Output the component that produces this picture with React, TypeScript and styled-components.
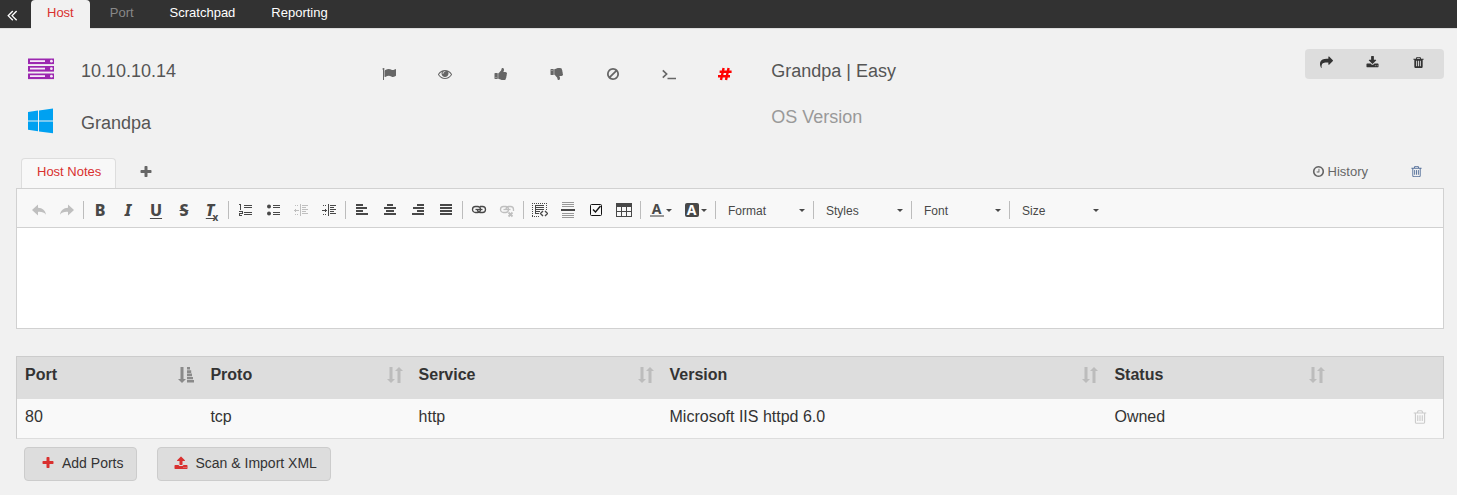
import React from "react";
import styled, { createGlobalStyle, css } from "styled-components";

const GlobalStyle = createGlobalStyle`
  *, *::before, *::after { box-sizing: border-box; }
  body {
    margin: 0;
    background: #f1f1f1;
    color: #333;
    font-family: "Liberation Sans", Arial, Helvetica, sans-serif;
    font-size: 14px;
    line-height: 20px;
  }
  button, input, select, textarea { font: inherit; color: inherit; }
  svg { display: block; flex: none; }
`;

/* ---------- icons ---------- */

const paths = {
  collapse:
    "M1011 1376q0 13-10 23l-50 50q-10 10-23 10t-23-10l-466-466q-10-10-10-23t10-23l466-466q10-10 23-10t23 10l50 50q10 10 10 23t-10 23l-393 393 393 393q10 10 10 23zm384 0q0 13-10 23l-50 50q-10 10-23 10t-23-10l-466-466q-10-10-10-23t10-23l466-466q10-10 23-10t23 10l50 50q10 10 10 23t-10 23l-393 393 393 393q10 10 10 23z",
  flag: "M320 256q0 72-64 110v1266q0 13-9.5 22.5t-22.5 9.5h-64q-13 0-22.5-9.5t-9.5-22.5v-1266q-64-38-64-110 0-53 37.5-90.5t90.5-37.5 90.5 37.5 37.5 90.5zm1472 64v763q0 25-12.5 38.5t-39.5 27.5q-215 116-369 116-61 0-123.5-22t-108.5-48-115.5-48-142.5-22q-192 0-464 146-17 9-33 9-26 0-45-19t-19-45v-742q0-32 31-55 21-14 79-43 236-120 421-120 107 0 200 29t219 88q38 19 88 19 54 0 117.5-21t110-47 88-47 54.5-21q26 0 45 19t19 45z",
  eye: "M1664 960q-152-236-381-353 61 104 61 225 0 185-131.5 316.5t-316.5 131.5-316.5-131.5-131.5-316.5q0-121 61-225-229 117-381 353 133 205 333.5 326.5t434.5 121.5 434.5-121.5 333.5-326.5zm-720-384q0-20-14-34t-34-14q-125 0-214.5 89.5t-89.5 214.5q0 20 14 34t34 14 34-14 14-34q0-86 61-147t147-61q20 0 34-14t14-34zm848 384q0 34-20 69-140 230-376.5 368.5t-499.5 138.5-499.5-139-376.5-368q-20-35-20-69t20-69q140-229 376.5-368t499.5-139 499.5 139 376.5 368q20 35 20 69z",
  thumb:
    "M320 1344q0-26-19-45t-45-19q-27 0-45.5 19t-18.5 45q0 27 18.5 45.5t45.5 18.5q26 0 45-18.5t19-45.5zm160-512v640q0 26-19 45t-45 19h-288q-26 0-45-19t-19-45v-640q0-26 19-45t45-19h288q26 0 45 19t19 45zm1184 0q0 86-55 149 15 44 15 76 3 76-43 137 17 56 0 117-15 57-54 94 9 112-49 181-64 76-197 78h-129q-66 0-144-15.5t-121.5-29-120.5-39.5q-123-43-158-44-26-1-45-19.5t-19-44.5v-641q0-25 18-43.5t43-20.5q24-2 76-59t101-121q68-87 101-120 18-18 31-48t17.5-48.5 13.5-60.5q7-39 12.5-61t19.5-52 34-50q19-19 45-19 46 0 82.5 10.5t60 26 40 40.5 24 45 12 50 5 45 .5 39q0 38-9.5 76t-19 60-27.5 56q-3 6-10 18t-11 22-8 24h277q78 0 135 57t57 135z",
  ban: "M1440 893q0-161-87-295l-754 753q137 89 297 89 111 0 211.5-43.5t173.5-116.5 116-174.5 43-212.5zm-999 299l755-754q-135-91-300-91-148 0-273 73t-198 199-73 274q0 162 89 299zm1223-299q0 157-61 300t-163.5 246-245 164-298.5 61-298.5-61-245-164-163.5-246-61-300 61-299.5 163.5-245.5 245-164 298.5-61 298.5 61 245 164 163.5 245.5 61 299.5z",
  share:
    "M1792 640q0 26-19 45l-512 512q-19 19-45 19t-45-19-19-45v-256h-224q-98 0-175.5 6t-154 21.5-133 42.5-105.5 69.5-80 101-48.5 138.5-17.5 181q0 55 5 123 0 6 2.5 23.5t2.5 26.5q0 15-8.5 25t-23.5 10q-16 0-28-17-7-9-13-22t-13.5-30-10.5-24q-127-285-127-451 0-199 53-333 162-403 875-403h224v-256q0-26 19-45t45-19 45 19l512 512q19 19 19 45z",
  download:
    "M1344 1344q0-26-19-45t-45-19-45 19-19 45 19 45 45 19 45-19 19-45zm256 0q0-26-19-45t-45-19-45 19-19 45 19 45 45 19 45-19 19-45zm128-224v320q0 40-28 68t-68 28h-1472q-40 0-68-28t-28-68v-320q0-40 28-68t68-28h465l135 136q58 56 136 56t136-56l136-136h464q40 0 68 28t28 68zm-325-569q17 41-14 70l-448 448q-18 19-45 19t-45-19l-448-448q-31-29-14-70 17-39 59-39h256v-448q0-26 19-45t45-19h256q26 0 45 19t19 45v448h256q42 0 59 39z",
  upload:
    "M1344 1472q0-26-19-45t-45-19-45 19-19 45 19 45 45 19 45-19 19-45zm256 0q0-26-19-45t-45-19-45 19-19 45 19 45 45 19 45-19 19-45zm128-224v320q0 40-28 68t-68 28h-1472q-40 0-68-28t-28-68v-320q0-40 28-68t68-28h427q21 56 70.5 92t110.5 36h256q61 0 110.5-36t70.5-92h427q40 0 68 28t28 68zm-325-648q-17 40-59 40h-256v448q0 26-19 45t-45 19h-256q-26 0-45-19t-19-45v-448h-256q-42 0-59-40-17-39 14-69l448-448q18-19 45-19t45 19l448 448q31 30 14 69z",
  trash:
    "M704 1376v-704q0-14-9-23t-23-9h-64q-14 0-23 9t-9 23v704q0 14 9 23t23 9h64q14 0 23-9t9-23zm256 0v-704q0-14-9-23t-23-9h-64q-14 0-23 9t-9 23v704q0 14 9 23t23 9h64q14 0 23-9t9-23zm256 0v-704q0-14-9-23t-23-9h-64q-14 0-23 9t-9 23v704q0 14 9 23t23 9h64q14 0 23-9t9-23zm-544-992h448l-48-117q-7-9-17-11h-317q-10 2-17 11zm928 32v64q0 14-9 23t-23 9h-96v948q0 83-47 143.5t-113 60.5h-832q-66 0-113-58.5t-47-141.5v-952h-96q-14 0-23-9t-9-23v-64q0-14 9-23t23-9h309l70-167q15-37 54-63t79-26h320q40 0 79 26t54 63l70 167h309q14 0 23 9t9 23z",
  trashOutline:
    "M704 736v576q0 14-9 23t-23 9h-64q-14 0-23-9t-9-23v-576q0-14 9-23t23-9h64q14 0 23 9t9 23zm256 0v576q0 14-9 23t-23 9h-64q-14 0-23-9t-9-23v-576q0-14 9-23t23-9h64q14 0 23 9t9 23zm256 0v576q0 14-9 23t-23 9h-64q-14 0-23-9t-9-23v-576q0-14 9-23t23-9h64q14 0 23 9t9 23zm128 724v-948h-896v948q0 22 7 40.5t14.5 27 10.5 8.5h832q3 0 10.5-8.5t14.5-27 7-40.5zm-672-1076h448l-48-117q-7-9-17-11h-317q-10 2-17 11zm928 32v64q0 14-9 23t-23 9h-96v948q0 83-47 143.5t-113 60.5h-832q-66 0-113-58.5t-47-141.5v-952h-96q-14 0-23-9t-9-23v-64q0-14 9-23t23-9h309l70-167q15-37 54-63t79-26h320q40 0 79 26t54 63l70 167h309q14 0 23 9t9 23z",
  plus: "M1600 736v192q0 40-28 68t-68 28h-416v416q0 40-28 68t-68 28h-192q-40 0-68-28t-28-68v-416h-416q-40 0-68-28t-28-68v-192q0-40 28-68t68-28h416v-416q0-40 28-68t68-28h192q40 0 68 28t28 68v416h416q40 0 68 28t28 68z",
  clock:
    "M1024 544v448q0 14-9 23t-23 9h-320q-14 0-23-9t-9-23v-64q0-14 9-23t23-9h224v-352q0-14 9-23t23-9h64q14 0 23 9t9 23zm416 352q0-148-73-273t-198-198-273-73-273 73-198 198-73 273 73 273 198 198 273 73 273-73 198-198 73-273zm224 0q0 209-103 385.5t-279.5 279.5-385.5 103-385.5-103-279.5-279.5-103-385.5 103-385.5 279.5-279.5 385.5-103 385.5 103 279.5 279.5 103 385.5z",
};

function Icon({ name, size = 14, flip = false }: { name: keyof typeof paths; size?: number; flip?: boolean }) {
  return (
    <svg width={size} height={size} viewBox="0 0 1792 1792" fill="currentColor" aria-hidden="true">
      <path d={paths[name]} transform={flip ? "translate(0 1792) scale(1 -1)" : undefined} />
    </svg>
  );
}

const TerminalIcon = () => (
  <svg width="14" height="14" viewBox="0 0 14 14" fill="none" stroke="currentColor" aria-hidden="true">
    <path d="M.8 3.3 4.600 7 .8 10.700" strokeWidth="1.700" />
    <path d="M5.500 11.500h8.500" strokeWidth="1.500" />
  </svg>
);

const HashIcon = () => (
  <svg width="14" height="14" viewBox="0 0 14 14" fill="none" stroke="currentColor" strokeWidth="2.4" aria-hidden="true">
    <path d="M5.600 1 3 13M10.600 1 8 13M1.600 4.800H13.600M0 9.200H12" />
  </svg>
);

const ServerIcon = () => (
  <svg width="26" height="22" viewBox="0 0 26 22" aria-hidden="true">
    {[0, 7.5, 15].map((y) => (
      <g key={y}>
        <rect x="0" y={y + 0.5} width="26" height="5.6" fill="#9c27b0" />
        <rect x="2" y={y + 2.2} width="15" height="1.8" fill="#f6e6f8" />
        <circle cx="23.4" cy={y + 3.2} r="1.4" fill="#f6e6f8" />
      </g>
    ))}
  </svg>
);

const WindowsIcon = () => (
  <svg width="25" height="26" viewBox="0 0 25 26" fill="#00a1f1" aria-hidden="true">
    <path d="M0 4 10 2.6V12.4H0zM11 2.4 25 .5V12.4H11zM0 13.4H10V23.2L0 21.8zM11 13.4H25V25.3L11 23.4z" />
  </svg>
);

function SortIcon({ active = false }: { active?: boolean }) {
  return (
    <svg width="16" height="18" viewBox="0 0 16 18" fill={active ? "#8a8a8a" : "#bcbcbc"} aria-hidden="true">
      <path d="M2.5 1h3v12H8l-4 4-4-4h2.5z" />
      {active ? (
        <path d="M9 1h3v2.6H9zM9 4.3h4.2v2.6H9zM9 7.6h5v2.6H9zM9 10.9h6v2.4H9zM9 14h7v2.4H9z" />
      ) : (
        <path d="M10.5 17h3V5H16l-4-4-4 4h2.5z" />
      )}
    </svg>
  );
}

const tool = { width: 16, height: 16, viewBox: "0 0 16 16", "aria-hidden": true, shapeRendering: "crispEdges" as const };
const line = { fill: "none", stroke: "currentColor" };

const UndoIcon = () => (
  <svg {...tool} shapeRendering="auto" fill="currentColor">
    <path d="M7 2.500v3.200c4.600.2 7.400 2.600 8 7-1.800-2.300-4.200-3-8-2.800v3.600L1 8z" />
  </svg>
);
const RedoIcon = () => (
  <svg {...tool} shapeRendering="auto" fill="currentColor">
    <path d="M9 2.500v3.200c-4.600.2-7.400 2.600-8 7 1.800-2.300 4.200-3 8-2.800v3.600l6-5.500z" />
  </svg>
);
const OrderedIcon = () => (
  <svg {...tool} {...line}>
    <path d="M7 3.500h8M7 5.500h8M7 10.500h8M7 12.500h8M2 2.500h1.500v5M2 9.500h3v2H2.500v2H5" />
  </svg>
);
const BulletIcon = () => (
  <svg {...tool} {...line}>
    <path d="M8 3.500h7M8 5.500h7M8 10.500h7M8 12.500h7" />
    <g fill="currentColor" stroke="none" shapeRendering="auto">
      <circle cx="4" cy="4.500" r="2" />
      <circle cx="4" cy="11.500" r="2" />
    </g>
  </svg>
);
const OutdentIcon = () => (
  <svg {...tool} {...line}>
    <path d="M9 3.500h6M9 5.500h4M9 7.500h6M9 9.500h4M9 11.500h6M1 8.500h5M2.500 7v3" />
    <path d="M7.500 2v12" />
    <path d="M2 3.500h4M2 12.500h4" strokeDasharray="1 1" />
  </svg>
);
const IndentIcon = () => (
  <svg {...tool} {...line}>
    <path d="M9 3.500h6M9 5.500h4M9 7.500h6M9 9.500h4M9 11.500h6M1 8.500h5M4.500 7v3" />
    <path d="M7.500 2v12" />
    <path d="M2 3.500h4M2 12.500h4" strokeDasharray="1 1" />
  </svg>
);
function AlignIcon({ mode }: { mode: "left" | "center" | "right" | "full" }) {
  const widths = mode === "full" ? [12, 12, 12, 12] : mode === "center" ? [6, 12, 8, 12] : [7, 11, 7, 12];
  return (
    <svg {...tool} fill="currentColor">
      {widths.map((w, i) => (
        <rect
          key={i}
          x={mode === "right" ? 14 - w : mode === "center" ? 8 - w / 2 : 2}
          y={2 + i * 3}
          width={w}
          height="2"
        />
      ))}
    </svg>
  );
}
function LinkIcon({ broken = false }: { broken?: boolean }) {
  return (
    <svg {...tool} {...line} shapeRendering="auto" strokeWidth="1.300">
      <rect x="1.500" y="4.500" width="8" height="6" rx="3" />
      <path d={broken ? "M7 7.500a3 3 0 0 1 2.500-3h2a3 3 0 0 1 3 3V9" : "M9 4.500h2.500a3 3 0 0 1 0 6H9a3 3 0 0 1-2.500-3"} />
      <path d="M4.500 7.500h7" />
      {broken && <path d="m9.500 10.500 4 4m0-4-4 4" strokeWidth="1.800" />}
    </svg>
  );
}
const CodeBlockIcon = () => (
  <svg {...tool} {...line}>
    <path d="M0 1.500h15M0 14.500h8" strokeDasharray="1 1" />
    <path d="M.5 1v14M14.500 1v7" strokeDasharray="1 1" />
    <path d="M3.500 3v9M4 3.500h8M4 5.500h8M4 7.500h8M4 9.500h4M3 11.500h4" />
    <path d="m11 9-2.500 2.500L11 14m2-5 2.500 2.500L13 14" strokeWidth="1.400" shapeRendering="auto" />
  </svg>
);
const RuleIcon = () => (
  <svg {...tool} {...line}>
    <path d="M2 .5h12M2 2.500h12M2 4.500h12M2 11.500h12M2 13.500h12M2 15.500h12" strokeOpacity="0.550" />
    <path d="M1 8h14" strokeWidth="2" />
  </svg>
);
const TaskIcon = () => (
  <svg {...tool} {...line} shapeRendering="auto" stroke="#111">
    <rect x="2.500" y="2.500" width="11" height="11" rx="1" />
    <path d="m5 7.500 2.500 2.500 5-6" strokeWidth="1.400" />
  </svg>
);
const TableIcon = () => (
  <svg {...tool} {...line}>
    <path d="M.5 1.500h15v13H.5zM0 9.500h16M5.500 5v10M10.500 5v10" />
    <path d="M0 3h16" strokeWidth="4" />
  </svg>
);

/* ---------- top navigation ---------- */

const TopBar = styled.header`
  display: flex;
  height: 28px;
  background: #323232;
  box-shadow: 0 1px 0 #ddd;
`;

const CollapseButton = styled.button`
  display: flex;
  align-items: center;
  justify-content: center;
  width: 31px;
  padding: 1px 7px 0 0;
  border: 0;
  background: none;
  color: #fff;
`;

const TabList = styled.nav`
  display: flex;
  gap: 4px;
`;

const TopTab = styled.a<{ $state?: "active" | "disabled" }>`
  padding: 3px 16px 0;
  font-size: 13px;
  line-height: 20px;
  text-decoration: none;
  color: #fff;
  ${(p) => p.$state === "disabled" && css`color: #888;`}
  ${(p) =>
    p.$state === "active" &&
    css`
      height: 29px;
      border-radius: 4px 4px 0 0;
      background: #f1f1f1;
      color: #d9302f;
    `}
`;

/* ---------- host summary ---------- */

const Summary = styled.section`
  display: grid;
  grid-template-columns: 25% 28% 1fr auto;
  align-items: start;
  padding: 21px 13px 0 0;
  font-size: 18px;
  color: #555;
`;

const Identity = styled.dl`
  display: grid;
  grid-template-columns: 53px 1fr;
  row-gap: 32px;
  margin: 12px 0 0;
  padding-left: 28px;
`;

const IdentityIcon = styled.dt`
  display: flex;
  align-items: center;
  height: 20px;
  margin-top: -2px;
`;

const IdentityValue = styled.dd`
  margin: 0;
`;

const FlagBar = styled.div`
  display: flex;
  padding-top: 15px;
`;

const FlagButton = styled.button<{ $alert?: boolean }>`
  display: flex;
  justify-content: center;
  align-items: center;
  width: 56px;
  height: 20px;
  padding: 0;
  border: 0;
  background: none;
  color: ${(p) => (p.$alert ? "#f00" : "#666")};
`;

const Details = styled.div`
  display: flex;
  flex-direction: column;
  gap: 26px;
  padding: 12px 6px 0;
`;

const DetailInput = styled.input`
  width: 100%;
  height: 20px;
  padding: 0;
  border: 0;
  outline: 0;
  background: none;
  &::placeholder { color: #999; opacity: 1; }
`;

const ActionGroup = styled.div`
  display: flex;
  height: 30px;
  border-radius: 4px;
  overflow: hidden;
`;

const ActionButton = styled.button`
  display: flex;
  justify-content: center;
  align-items: center;
  width: 46px;
  padding: 0 4px 3px 0;
  border: 0;
  background: #ddd;
  color: #333;
  &:last-child { width: 47px; }
`;

/* ---------- notes editor ---------- */

const Notes = styled.section`
  margin: 25px 13px 0 16px;
`;

const NotesBar = styled.div`
  display: flex;
  align-items: center;
  height: 30px;
  padding: 0 21px 0 5px;
  font-size: 13px;
  line-height: 20px;
  color: #666;
`;

const NotesTab = styled.a`
  height: 30px;
  padding: 3px 14px 0 15px;
  border: 1px solid #ddd;
  border-bottom: 0;
  border-radius: 4px 4px 0 0;
  background: #f8f8f8;
  color: #d9302f;
  text-decoration: none;
`;

const NotesAction = styled.button`
  display: flex;
  align-items: center;
  gap: 3px;
  padding: 0 0 3px;
  border: 0;
  background: none;
`;

const AddNote = styled(NotesAction)`
  margin: 0 auto 0 23px;
`;

const DeleteNote = styled(NotesAction)`
  margin-left: 42px;
  color: #55709a;
`;

const Editor = styled.div`
  border: 1px solid #d1d1d1;
  background: #fff;
`;

const Toolbar = styled.div`
  display: flex;
  flex-wrap: wrap;
  align-items: center;
  min-height: 39px;
  padding: 6px 8px 2px;
  border-bottom: 1px solid #d1d1d1;
  background: #f8f8f8;
  color: #484848;
`;

const ToolGroup = styled.div`
  display: flex;
  align-items: center;
  &:not(:last-child)::after {
    content: "";
    width: 1px;
    height: 18px;
    margin: 0 2px;
    background: #bcbcbc;
  }
`;

const ToolButton = styled.button<{ $wide?: boolean }>`
  display: flex;
  align-items: center;
  justify-content: center;
  gap: 2px;
  width: ${(p) => (p.$wide ? 35 : 28)}px;
  height: 28px;
  padding: 0;
  border: 0;
  background: none;
  &:disabled { color: #bfbfbf; }
`;

const Glyph = styled.span<{ $italic?: boolean; $line?: string }>`
  font-family: "Noto Sans", sans-serif;
  font-size: 16px;
  line-height: 20px;
  font-weight: 800;
  font-style: ${(p) => (p.$italic ? "italic" : "normal")};
  text-decoration: ${(p) => p.$line ?? "none"};
  text-decoration-thickness: 1px;
  text-underline-offset: 2px;
`;

const SubGlyph = styled.sub`
  align-self: flex-end;
  margin-left: -4px;
  font-family: "Noto Sans", sans-serif;
  font-size: 10px;
  line-height: 14px;
  font-weight: 700;
`;

const ColorGlyph = styled.span<{ $filled?: boolean }>`
  width: 14px;
  height: 14px;
  font-family: "Noto Sans", sans-serif;
  font-size: 14px;
  line-height: 14px;
  font-weight: 700;
  text-align: center;
  ${(p) =>
    p.$filled
      ? css`
          border-radius: 2px;
          background: #484848;
          color: #fff;
        `
      : css`
          line-height: 12px;
          border-bottom: 2px solid #999;
        `}
`;

const Caret = styled.span`
  width: 0;
  height: 0;
  border: 3px solid transparent;
  border-top-color: #484848;
  border-bottom: 0;
`;

const Combo = styled.label`
  display: grid;
  grid-template-columns: 93px;
  align-items: center;
  font-size: 12px;
  & > * { grid-area: 1 / 1; }
  ${Caret} { justify-self: end; margin-right: 6px; pointer-events: none; }
`;

const ComboSelect = styled.select`
  width: 100%;
  height: 26px;
  padding: 2px 10px 0;
  border: 0;
  background: none;
  appearance: none;
`;

const NoteBody = styled.textarea`
  display: block;
  width: 100%;
  height: 100px;
  padding: 20px;
  border: 0;
  outline: 0;
  resize: none;
  background: #fff;
`;

/* ---------- ports table ---------- */

const Ports = styled.section`
  margin: 27px 13px 0 16px;
`;

const PortTable = styled.table`
  width: 100%;
  border: 1px solid #ccc;
  border-bottom-color: #ddd;
  border-spacing: 0;
  table-layout: fixed;
  font-size: 16px;
  line-height: 20px;
`;

const Column = styled.col<{ $share?: number }>`
  ${(p) => p.$share && css`width: ${p.$share}%;`}
`;

const HeadCell = styled.th`
  height: 42px;
  padding: 8px 8px 14px;
  background: #ddd;
  text-align: left;
`;

const SortButton = styled.button`
  display: flex;
  align-items: center;
  justify-content: space-between;
  width: 100%;
  height: 20px;
  padding: 0;
  border: 0;
  background: none;
  font-weight: 700;
`;

const Cell = styled.td`
  height: 39px;
  padding: 7px 8px 11px;
  background: #f9f9f9;
`;

const RowDelete = styled.button`
  display: block;
  margin: 0 7px 0 auto;
  padding: 0;
  border: 0;
  background: none;
  color: #ccc;
`;

const Footer = styled.div`
  display: flex;
  flex-wrap: wrap;
  gap: 20px;
  padding: 8px 8px 14px;
`;

const FooterButton = styled.button`
  display: flex;
  align-items: center;
  gap: 7px;
  height: 34px;
  padding: 0 13px 3px 16px;
  border: 1px solid #ccc;
  border-radius: 4px;
  background: #ddd;
  color: #333;
  svg { color: #d9302f; }
`;

const columns = [
  { label: "Port", share: 13, active: true },
  { label: "Proto", share: 14.6 },
  { label: "Service", share: 17.6 },
  { label: "Version", share: 31.2 },
  { label: "Status", share: 15.9 },
];

const rows = [["80", "tcp", "http", "Microsoft IIS httpd 6.0", "Owned"]];

export default function App() {
  return (
    <>
      <GlobalStyle />
      <TopBar>
        <CollapseButton aria-label="Collapse sidebar">
          <Icon name="collapse" size={18} />
        </CollapseButton>
        <TabList>
          <TopTab href="#host" $state="active">Host</TopTab>
          <TopTab href="#port" $state="disabled">Port</TopTab>
          <TopTab href="#scratchpad">Scratchpad</TopTab>
          <TopTab href="#reporting">Reporting</TopTab>
        </TabList>
      </TopBar>

      <main>
        <Summary>
          <Identity>
            <IdentityIcon aria-label="Address"><ServerIcon /></IdentityIcon>
            <IdentityValue>10.10.10.14</IdentityValue>
            <IdentityIcon aria-label="Host name"><WindowsIcon /></IdentityIcon>
            <IdentityValue>Grandpa</IdentityValue>
          </Identity>
          <FlagBar>
            <FlagButton aria-label="Flag"><Icon name="flag" /></FlagButton>
            <FlagButton aria-label="Watch"><Icon name="eye" /></FlagButton>
            <FlagButton aria-label="Good"><Icon name="thumb" /></FlagButton>
            <FlagButton aria-label="Bad"><Icon name="thumb" flip /></FlagButton>
            <FlagButton aria-label="Out of scope"><Icon name="ban" /></FlagButton>
            <FlagButton aria-label="Shell"><TerminalIcon /></FlagButton>
            <FlagButton aria-label="Root" $alert><HashIcon /></FlagButton>
          </FlagBar>
          <Details>
            <DetailInput aria-label="Description" defaultValue="Grandpa | Easy" />
            <DetailInput aria-label="OS Version" placeholder="OS Version" />
          </Details>
          <ActionGroup>
            <ActionButton aria-label="Share"><Icon name="share" size={13} /></ActionButton>
            <ActionButton aria-label="Download"><Icon name="download" size={13} /></ActionButton>
            <ActionButton aria-label="Delete host"><Icon name="trash" size={13} /></ActionButton>
          </ActionGroup>
        </Summary>

        <Notes>
          <NotesBar>
            <NotesTab href="#notes">Host Notes</NotesTab>
            <AddNote aria-label="Add note"><Icon name="plus" /></AddNote>
            <NotesAction><Icon name="clock" size={13} />History</NotesAction>
            <DeleteNote aria-label="Delete note"><Icon name="trashOutline" size={13} /></DeleteNote>
          </NotesBar>
          <Editor>
            <Toolbar role="toolbar">
              <ToolGroup>
                <ToolButton aria-label="Undo" disabled><UndoIcon /></ToolButton>
                <ToolButton aria-label="Redo" disabled><RedoIcon /></ToolButton>
              </ToolGroup>
              <ToolGroup>
                <ToolButton aria-label="Bold"><Glyph>B</Glyph></ToolButton>
                <ToolButton aria-label="Italic"><Glyph $italic>I</Glyph></ToolButton>
                <ToolButton aria-label="Underline"><Glyph $line="underline">U</Glyph></ToolButton>
                <ToolButton aria-label="Strikethrough"><Glyph $line="line-through">S</Glyph></ToolButton>
                <ToolButton aria-label="Remove format">
                  <Glyph $italic $line="underline">T</Glyph>
                  <SubGlyph>x</SubGlyph>
                </ToolButton>
              </ToolGroup>
              <ToolGroup>
                <ToolButton aria-label="Numbered list"><OrderedIcon /></ToolButton>
                <ToolButton aria-label="Bulleted list"><BulletIcon /></ToolButton>
                <ToolButton aria-label="Decrease indent" disabled><OutdentIcon /></ToolButton>
                <ToolButton aria-label="Increase indent"><IndentIcon /></ToolButton>
              </ToolGroup>
              <ToolGroup>
                <ToolButton aria-label="Align left"><AlignIcon mode="left" /></ToolButton>
                <ToolButton aria-label="Center"><AlignIcon mode="center" /></ToolButton>
                <ToolButton aria-label="Align right"><AlignIcon mode="right" /></ToolButton>
                <ToolButton aria-label="Justify"><AlignIcon mode="full" /></ToolButton>
              </ToolGroup>
              <ToolGroup>
                <ToolButton aria-label="Link"><LinkIcon /></ToolButton>
                <ToolButton aria-label="Unlink" disabled><LinkIcon broken /></ToolButton>
              </ToolGroup>
              <ToolGroup>
                <ToolButton aria-label="Code snippet"><CodeBlockIcon /></ToolButton>
                <ToolButton aria-label="Horizontal line"><RuleIcon /></ToolButton>
                <ToolButton aria-label="Checkbox"><TaskIcon /></ToolButton>
                <ToolButton aria-label="Table"><TableIcon /></ToolButton>
              </ToolGroup>
              <ToolGroup>
                <ToolButton $wide aria-label="Text color"><ColorGlyph>A</ColorGlyph><Caret /></ToolButton>
                <ToolButton $wide aria-label="Background color"><ColorGlyph $filled>A</ColorGlyph><Caret /></ToolButton>
              </ToolGroup>
              {["Format", "Styles", "Font", "Size"].map((label) => (
                <ToolGroup key={label}>
                  <Combo>
                    <ComboSelect aria-label={label}><option>{label}</option></ComboSelect>
                    <Caret />
                  </Combo>
                </ToolGroup>
              ))}
            </Toolbar>
            <NoteBody aria-label="Host notes" />
          </Editor>
        </Notes>

        <Ports>
          <PortTable>
            <colgroup>
              {columns.map((c) => <Column key={c.label} $share={c.share} />)}
              <Column />
            </colgroup>
            <thead>
              <tr>
                {columns.map((c) => (
                  <HeadCell key={c.label} scope="col">
                    <SortButton>{c.label}<SortIcon active={c.active} /></SortButton>
                  </HeadCell>
                ))}
                <HeadCell aria-label="Actions" />
              </tr>
            </thead>
            <tbody>
              {rows.map((row) => (
                <tr key={row[0]}>
                  {row.map((value) => <Cell key={value}>{value}</Cell>)}
                  <Cell><RowDelete aria-label="Delete port"><Icon name="trashOutline" size={16} /></RowDelete></Cell>
                </tr>
              ))}
            </tbody>
          </PortTable>
          <Footer>
            <FooterButton><Icon name="plus" />Add Ports</FooterButton>
            <FooterButton><Icon name="upload" />Scan &amp; Import XML</FooterButton>
          </Footer>
        </Ports>
      </main>
    </>
  );
}
